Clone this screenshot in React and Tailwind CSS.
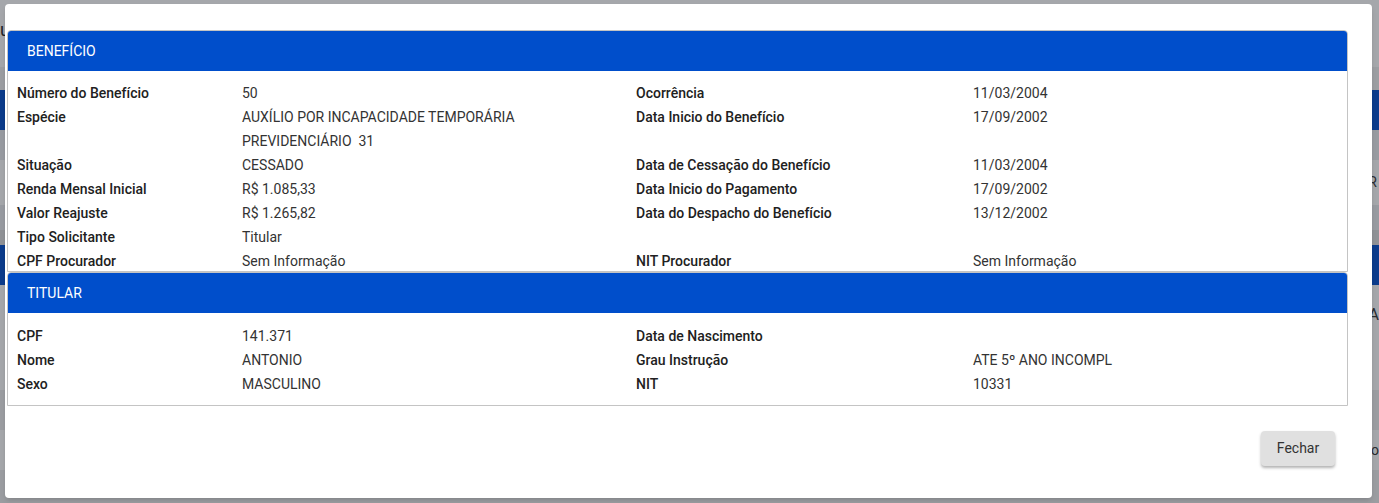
import React from "react";

const beneficio = [
  ["Número do Benefício", "50", "Ocorrência", "11/03/2004"],
  ["Espécie", "AUXÍLIO POR INCAPACIDADE TEMPORÁRIA\nPREVIDENCIÁRIO  31", "Data Inicio do Benefício", "17/09/2002"],
  ["Situação", "CESSADO", "Data de Cessação do Benefício", "11/03/2004"],
  ["Renda Mensal Inicial", "R$ 1.085,33", "Data Inicio do Pagamento", "17/09/2002"],
  ["Valor Reajuste", "R$ 1.265,82", "Data do Despacho do Benefício", "13/12/2002"],
  ["Tipo Solicitante", "Titular", "", ""],
  ["CPF Procurador", "Sem Informação", "NIT Procurador", "Sem Informação"],
];

const titular = [
  ["CPF", "141.371", "Data de Nascimento", ""],
  ["Nome", "ANTONIO", "Grau Instrução", "ATE 5º ANO INCOMPL"],
  ["Sexo", "MASCULINO", "NIT", "10331"],
];

const Rows = ({ rows }) => (
  <div className="grid grid-cols-[225px_394px_337px_1fr] text-[14px] leading-6">
    {rows.map(([l1, v1, l2, v2]) => (
      <React.Fragment key={l1}>
        <div className="font-medium text-[#212121]">{l1}</div>
        <div className="whitespace-pre text-[#333]">{v1}</div>
        <div className="font-medium text-[#212121]">{l2}</div>
        <div className="text-[#333]">{v2}</div>
      </React.Fragment>
    ))}
  </div>
);

const Card = ({ title, children, bodyClass }) => (
  <div className="border border-[#c4c4c4] rounded-t-[4px] bg-white">
    <div className="h-10 bg-[#004ecb] rounded-t-[3px] flex items-center px-[19px] text-[14px] text-white">
      {title}
    </div>
    <div className={bodyClass}>{children}</div>
  </div>
);

export default function App() {
  return (
    <div className="relative w-[1379px] h-[503px] overflow-hidden bg-white" style={{ fontFamily: "Roboto, 'Liberation Sans', sans-serif" }}>
      {/* page behind the dialog */}
      <div className="flex flex-col">
        <div className="h-[67px] bg-white pt-5 text-[18px] leading-5 text-[#222]">u</div>
        <div className="h-[23px] bg-[#f0f0f0]" />
        <div className="h-[40px] bg-[#004ecb]" />
        <div className="h-[30px] bg-[#e9ecef]" />
        <div className="h-[45px] bg-white flex justify-end items-center pr-[2px] text-[14px] text-[#333]">R</div>
        <div className="h-[25px] bg-[#e9ecef]" />
        <div className="h-[15px] bg-[#dcdcdc]" />
        <div className="h-[40px] bg-[#004ecb]" />
        <div className="h-[60px] bg-white flex justify-end items-center text-[16px] text-[#333]">A</div>
        <div className="h-[45px] bg-white" />
        <div className="h-[40px] bg-[#eeeeee]" />
        <div className="h-[40px] bg-white flex justify-end items-center text-[14px] text-[#333]">o</div>
        <div className="h-[33px] bg-[#eeeeee]" />
      </div>

      {/* backdrop */}
      <div className="absolute inset-0 bg-[rgba(30,35,45,0.4)]" />

      {/* dialog */}
      <div className="absolute left-[5px] top-[4px] w-[1367px] h-[494px] bg-white rounded-[4px] shadow-md flex flex-col">
        <div className="pt-[26px] pl-[2px] pr-[24px]">
          <Card title="BENEFÍCIO" bodyClass="h-[200px] overflow-hidden pt-[10px] px-[9px]">
            <Rows rows={beneficio} />
          </Card>
          <Card title="TITULAR" bodyClass="pt-[11px] pb-[9px] px-[9px]">
            <Rows rows={titular} />
          </Card>
        </div>
        <div className="flex justify-end pt-[25px] pr-[37px]">
          <button className="w-[74px] h-[35px] bg-[#e0e0e0] rounded-[4px] shadow-[0_2px_3px_rgba(0,0,0,0.3)] text-[14px] text-[#333]">
            Fechar
          </button>
        </div>
      </div>
    </div>
  );
}
